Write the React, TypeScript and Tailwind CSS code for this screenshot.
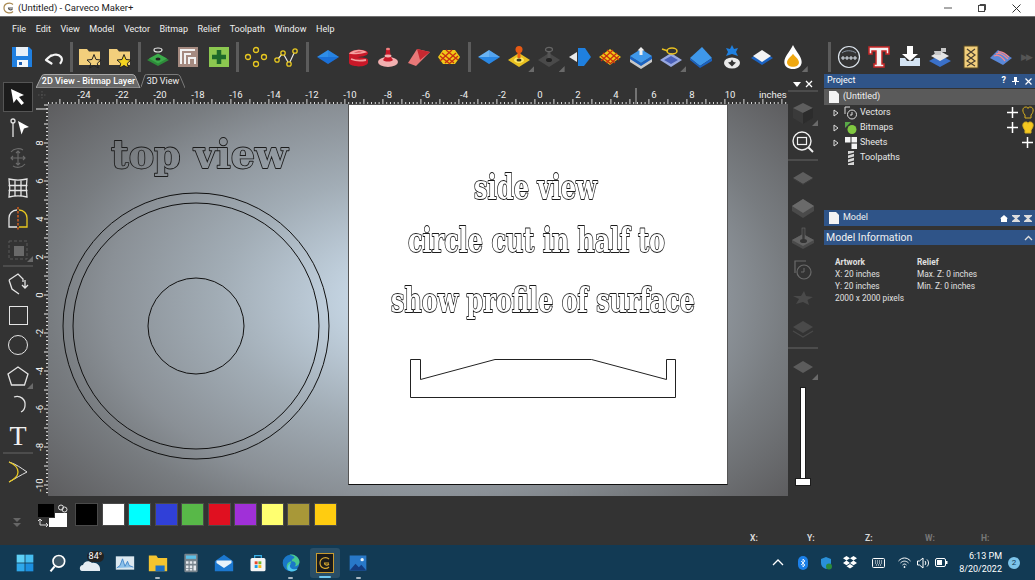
import type { ReactNode } from "react";

const menuItems = ["File", "Edit", "View", "Model", "Vector", "Bitmap", "Relief", "Toolpath", "Window", "Help"];
const swatches = ["bg-[#000000]", "bg-[#ffffff]", "bg-[#00ffff]", "bg-[#3040d8]", "bg-[#58b848]", "bg-[#e01020]", "bg-[#a030d8]", "bg-[#ffff70]", "bg-[#a89838]", "bg-[#ffcc10]"];

function Corner() {
  return <span className="absolute bottom-0 right-0 h-[6px] w-[6px] bg-[#6a6a6a] [clip-path:polygon(100%_0,100%_100%,0_100%)]" />;
}

function Btn({ children, corner, w = "w-[30.4px]" }: { children: ReactNode; corner?: boolean; w?: string }) {
  return (
    <div className={`relative flex h-[30px] shrink-0 items-center justify-center ${w}`}>
      {children}
      {corner && <Corner />}
    </div>
  );
}

function Ico({ children, size = 24 }: { children: ReactNode; size?: number }) {
  return (
    <svg width={size} height={size} viewBox="0 0 24 24" fill="none">
      {children}
    </svg>
  );
}

function Sep({ cls = "mx-[2px]" }: { cls?: string }) {
  return <div className={`h-[30px] w-[3px] shrink-0 bg-[#5c5c5c] ${cls}`} />;
}

// flat blue diamond, the relief buttons start from this shape
function Diamond({ hi, lo }: { hi: string; lo: string }) {
  return (
    <Ico>
      <polygon points="1,12 12,5 23,12" fill={hi} />
      <polygon points="1,12 12,19 23,12" fill={lo} />
      <polygon points="12,5 23,12 12,19" fill={lo} opacity=".35" />
    </Ico>
  );
}

function Save() {
  return (
    <Ico>
      <path d="M2 2h17l3 3v17H2z" fill="#1f7fe0" />
      <rect x="6" y="2" width="12" height="9" fill="#e8f0f8" />
      <rect x="7" y="15" width="11" height="7" fill="#f4f8fc" />
      <rect x="9" y="17" width="3" height="3" fill="#1f5fb0" />
    </Ico>
  );
}

function Undo() {
  return (
    <Ico>
      <path d="M5 15l5-4.500M5 15l5.500 3.500M5 15c5-6 12-7 15-3 1.500 2 1 4-.5 6" stroke="#f4f4f4" strokeWidth="2.200" strokeLinecap="round" />
    </Ico>
  );
}

function FolderStar({ fill }: { fill: string }) {
  return (
    <Ico>
      <path d="M1 4h8l2 2.500h11V20H1z" fill="#f2cf7c" />
      <polygon points="16,9.500 18,14.500 23,15 19.300,18.300 20.400,23 16,20.500 11.600,23 12.700,18.300 9,15 14,14.500" fill={fill} stroke="#222" strokeWidth="1" />
    </Ico>
  );
}

function GreenRing() {
  return (
    <Ico>
      <polygon points="1,15 12,21 23,15 12,9" fill="#2e8b3a" />
      <polygon points="3,13.500 12,18.500 21,13.500 12,8.500" fill="#3cab4a" />
      <ellipse cx="12" cy="14" rx="2.500" ry="1.500" fill="#222" />
      <ellipse cx="12" cy="5" rx="4" ry="2" stroke="#e8e8e8" strokeWidth="1.200" />
    </Ico>
  );
}

function Maze() {
  return (
    <Ico>
      <rect x="2" y="2" width="20" height="20" fill="#a58a80" />
      <path d="M5 19V5h14M9 19V9h6M13 19v-6h6v6" stroke="#f2f2f2" strokeWidth="2" />
    </Ico>
  );
}

function GreenPlus() {
  return (
    <Ico>
      <rect x="2" y="2" width="20" height="20" fill="#8cc850" />
      <path d="M12 5v14M5 12h14" stroke="#1d6a2a" strokeWidth="4.500" />
    </Ico>
  );
}

function Nodes() {
  return (
    <Ico>
      <g stroke="#e8c820" strokeWidth="1.300">
        <circle cx="4" cy="12" r="2.500" />
        <circle cx="12" cy="5" r="2.500" />
        <circle cx="20" cy="12" r="2.500" />
        <circle cx="12" cy="19" r="2.500" />
      </g>
    </Ico>
  );
}

function Polyline() {
  return (
    <Ico>
      <path d="M3 15l6-7 6 11 6-13" stroke="#e8e8e8" strokeWidth="1.200" />
      <g stroke="#e8c820" strokeWidth="1.300" fill="#333">
        <circle cx="3" cy="15" r="2.200" />
        <circle cx="9" cy="8" r="2.200" />
        <circle cx="15" cy="19" r="2.200" />
        <circle cx="21" cy="6" r="2.200" />
      </g>
    </Ico>
  );
}

function Swirl() {
  return (
    <Ico>
      <path d="M3 9c0-5 18-6 19-1 0 3-8 4-11 4 3 1 11 0 11 3v3c-2 5-18 4-19 0z" fill="#c81828" />
      <path d="M5 8c4-3 11-3 14-1-3 1-8 2-14 1zM5 14c5 2 10 2 15 1" stroke="#f4a0a0" strokeWidth="1.800" />
    </Ico>
  );
}

function Cone() {
  return (
    <Ico>
      <ellipse cx="12" cy="17" rx="10" ry="5" fill="#f2b0b0" />
      <path d="M7 15c2-2 3-6 3-11h4c0 5 1 9 3 11-2 2-8 2-10 0z" fill="#c81828" />
      <ellipse cx="12" cy="4" rx="2" ry="1.300" fill="#f08080" />
      <ellipse cx="12" cy="11" rx="3.500" ry="1.400" fill="#f2b0b0" />
    </Ico>
  );
}

function Shard() {
  return (
    <Ico>
      <polygon points="1,18 10,4 23,7 9,21" fill="#e87878" />
      <polygon points="10,4 23,7 13,15" fill="#c82830" />
    </Ico>
  );
}

function Waffle({ rings }: { rings?: boolean }) {
  return (
    <Ico>
      <polygon points={rings ? "6,5 18,5 23,12 18,19 6,19 1,12" : "12,4 23,12 12,20 1,12"} fill="#f0c818" />
      <g stroke="#c83010" strokeWidth="1.300">
        <path d="M5 8l12 10M9 5l12 10M3 11l10 8M15 5l-12 11M19 8l-11 10M21 11l-9 8" />
      </g>
    </Ico>
  );
}

function Pin() {
  return (
    <Ico>
      <polygon points="1,15 12,8 23,15 12,22" fill="#e8c020" />
      <ellipse cx="12" cy="15" rx="5" ry="3" fill="#ffe860" />
      <ellipse cx="12" cy="15" rx="2.500" ry="1.500" fill="#332" />
      <rect x="10.500" y="6" width="3" height="7" fill="#e86018" />
      <circle cx="12" cy="4.500" r="3.500" fill="#e85a14" />
    </Ico>
  );
}

function GreyPin() {
  return (
    <Ico>
      <polygon points="1,15 12,8 23,15 12,22" fill="#4a4a4a" />
      <ellipse cx="12" cy="15" rx="3" ry="2" fill="#222" />
      <rect x="10.500" y="7" width="3" height="6" fill="#555" />
      <ellipse cx="12" cy="4.500" rx="3.500" ry="2.200" stroke="#666" strokeWidth="1.200" />
    </Ico>
  );
}

function Split() {
  return (
    <Ico>
      <polygon points="1,12 9,7 9,17" fill="#e8e8e8" />
      <polygon points="10,3 17,3 23,12 16,21 10,21" fill="#1f80e0" />
    </Ico>
  );
}

function Raise() {
  return (
    <Ico>
      <polygon points="1,13 12,20 23,13 23,17 12,24 1,17" fill="#c8c8c8" />
      <polygon points="1,11 12,18 23,11 23,14 12,21 1,14" fill="#1b62c0" />
      <polygon points="12,4 23,11 12,18 1,11" fill="#3f98ea" />
      <path d="M12 2l3.500 3.500h-2V10h-3V5.500h-2z" fill="#f0f0f0" />
    </Ico>
  );
}

function Sweep() {
  return (
    <Ico>
      <polygon points="1,15 12,8 23,15 12,22" fill="#98a8e0" />
      <polygon points="5,15 12,11 19,15 12,19" fill="#4a60b8" />
      <ellipse cx="13" cy="6" rx="5" ry="3" stroke="#e8c020" strokeWidth="1.500" />
      <path d="M3 4l6 2" stroke="#e8c020" strokeWidth="1.500" />
    </Ico>
  );
}

function Ramp() {
  return (
    <Ico>
      <polygon points="1,13 13,2 23,13 11,21" fill="#3f98ea" />
      <polygon points="11,21 23,13 23,16 11,23" fill="#1b62c0" />
      <polygon points="1,13 11,21 11,23 1,15" fill="#1b62c0" />
    </Ico>
  );
}

function StarDisc() {
  return (
    <Ico>
      <polygon points="12,0 14,4 18,3 16,7 18,11 12,9 6,11 8,7 6,3 10,4" fill="#1f80e0" />
      <ellipse cx="12" cy="18" rx="8" ry="5.500" fill="#eaeaea" />
      <polygon points="12,14.500 13.500,17 16,17.500 14,19.500 12,21.500 10,19.500 8,17.500 10.500,17" fill="#333" />
    </Ico>
  );
}

function WhiteSlab() {
  return (
    <Ico>
      <polygon points="1,13 12,6 23,13 12,20" fill="#1b62c0" />
      <polygon points="3,11 12,5 21,11 12,17" fill="#f4f4f4" />
    </Ico>
  );
}

function Drop() {
  return (
    <Ico size={26}>
      <path d="M12 1C9 7 4 12 4 16.500 4 20.500 7.500 23 12 23s8-2.500 8-6.500C20 12 15 7 12 1z" fill="#fff" />
      <path d="M12 9c-2 3-5.500 5-5.500 8 0 2.500 2.500 4 5.500 4s5.500-1.500 5.500-4c0-3-3.500-5-5.500-8z" fill="#f0a810" />
    </Ico>
  );
}

function Dial() {
  return (
    <Ico>
      <circle cx="12" cy="12" r="10.500" stroke="#dce4ec" strokeWidth="1.200" />
      <path d="M4 13h4M6 11v4M9 12h2v2H9zM13 12h2v2h-2zM17 12h2v2h-2z" stroke="#dce4ec" strokeWidth="1" />
      <path d="M5 8c3-3 10-3 14 0" stroke="#8a96a4" strokeWidth="1" />
    </Ico>
  );
}

function BigT() {
  return (
    <Ico>
      <path d="M2 2h20v7h-3V6h-4v13h2v3H7v-3h2V6H5v3H2z" fill="#f4f4f4" stroke="#c82828" strokeWidth="1.500" />
    </Ico>
  );
}

function Import() {
  return (
    <Ico>
      <path d="M9 1h6v8h5l-8 7-8-7h5z" fill="#fff" />
      <path d="M2 13h5l2 3h6l2-3h5v8H2z" fill="#d4e4f4" />
    </Ico>
  );
}

function Layers() {
  return (
    <Ico>
      <polygon points="1,16 12,10 23,16 12,22" fill="#3a70c8" />
      <polygon points="3,11 12,6 21,11 12,16" fill="#e4e4e4" />
      <path d="M6 6h7V3h5v4h-5v3H7z" fill="#c8c8c8" />
    </Ico>
  );
}

function Card() {
  return (
    <Ico>
      <rect x="5" y="1" width="14" height="22" fill="#f2cf7c" stroke="#5a4a20" />
      <path d="M8 4l8 6-8 6 8 5M16 4l-8 6 8 6-8 5" stroke="#4a4030" strokeWidth="1.200" />
    </Ico>
  );
}

function WavySheet() {
  return (
    <Ico>
      <polygon points="1,13 9,5 23,13 14,20" fill="#5a88d8" />
      <path d="M5 11c4-2 8 1 11 5M7 9c4-2 8 1 12 5M9 7c4-1 8 2 11 5" stroke="#f08890" strokeWidth="1.300" />
    </Ico>
  );
}

function Arrow() {
  return (
    <svg width="20" height="20" viewBox="0 0 20 20">
      <path d="M3 2l13 6-5 2 5 6-2.500 2-5-6-3 4z" fill="#fff" />
    </svg>
  );
}

function LeftTools() {
  const line = { stroke: "#e4e4e4", strokeWidth: 1.300 };
  return (
    <div className="relative flex w-[36px] shrink-0 flex-col items-center">
      <div className="mt-[8px] flex h-[30px] w-[30px] items-center justify-center border border-[#555] bg-[#1c1c1c]">
        <Arrow />
      </div>
      <div className="mt-[3px] flex h-[26px] items-center">
        <Ico>
          <circle cx="7" cy="5" r="2" {...line} />
          <path d="M7 7v14" {...line} />
          <path d="M12 5l11 6-5 1.500-2.500 6z" fill="#fff" />
        </Ico>
      </div>
      <div className="mt-[5px] flex h-[24px] items-center">
        <Ico>
          <g stroke="#6c6c6c" strokeWidth="1.100">
            <path d="M12 5v14M5 12h14M10 7l2-2 2 2M10 17l2 2 2-2M7 10l-2 2 2 2M17 10l2 2-2 2" />
            <path d="M5 6c3-4 9-4 12-2M19 18c-3 4-9 4-12 2" />
          </g>
        </Ico>
      </div>
      <div className="mt-[6px] flex h-[24px] items-center">
        <Ico>
          <path d="M3 3c6 1.500 12 1.500 18 0-1 6-1 12 0 18-6-1.500-12-1.500-18 0 1-6 1-12 0-18zM9 4v16M15 4v16M2.500 9.500h19M2.500 14.500h19" {...line} />
        </Ico>
      </div>
      <div className="mt-[7px] flex h-[24px] items-center">
        <Ico>
          <path d="M11 3C6 3 3 7 3 11v9h8" {...line} />
          <path d="M13 3c5 0 8 4 8 8v9h-8" stroke="#e8c820" strokeWidth="1.300" />
          <path d="M12 0v24" stroke="#e8641a" strokeWidth="1.300" strokeDasharray="2.500 1.500" />
        </Ico>
      </div>
      <div className="relative mt-[7px] flex h-[24px] w-[30px] items-center justify-center">
        <Ico>
          <rect x="3" y="3" width="18" height="18" stroke="#5a5a5a" strokeDasharray="3 2" />
          <rect x="8" y="8" width="10" height="10" fill="#6a6a6a" />
        </Ico>
        <Corner />
      </div>
      <div className="mt-[3px] h-[2px] w-[30px] bg-[#4c4c4c]" />
      <div className="mt-[4px] flex h-[26px] items-center">
        <Ico>
          <path d="M3 8l9-6 5 5 0 3M3 8l3 9 7 5" {...line} />
          <path d="M19 8v8m-3-3l3 3 3-3" {...line} />
        </Ico>
      </div>
      <div className="mt-[6px] flex h-[24px] items-center">
        <div className="h-[19px] w-[19px] border-[1.500px] border-[#e4e4e4]" />
      </div>
      <div className="mt-[5px] flex h-[26px] items-center">
        <div className="h-[20px] w-[20px] rounded-full border-[1.500px] border-[#e4e4e4]" />
      </div>
      <div className="relative mt-[5px] flex h-[26px] w-[30px] items-center justify-center">
        <Ico>
          <polygon points="12,3 22,10 18.500,21 5.500,21 2,10" {...line} />
        </Ico>
        <Corner />
      </div>
      <div className="mt-[3px] flex h-[26px] items-center">
        <Ico>
          <path d="M8 4c6-2 12 2 11 9-.300 3-2 5-4 6" {...line} />
        </Ico>
      </div>
      <div className="mt-[4px] font-['Liberation_Serif',serif] text-[28px] leading-[28px] text-[#f0f0f0]">T</div>
      <div className="mt-[2px] h-[2px] w-[30px] bg-[#4c4c4c]" />
      <div className="mt-[6px] flex h-[24px] items-center">
        <Ico>
          <path d="M3 2c7 2 12 6 18 10-6 3-11 6-18 10" stroke="#e4e4e4" strokeWidth="1" />
          <path d="M3 2c7 3 9 7 9 10s-3 7-9 10" stroke="#e8c820" strokeWidth="1.300" />
        </Ico>
      </div>
      <svg className="absolute left-[12px] top-[443px]" width="10" height="12" viewBox="0 0 10 12">
        <path d="M1 1h8L5 5zM1 6h8l-4 4z" fill="#666" />
      </svg>
    </div>
  );
}

function TopRuler() {
  const minor = Array.from({ length: 195 }, (_, i) => i);
  const labels = [-24, -22, -20, -18, -16, -14, -12, -10, -8, -6, -4, -2, 0, 2, 4, 6, 8, 10];
  return (
    <svg width="752" height="16" viewBox="0 0 752 16" className="block shrink-0">
      <g stroke="#d8d8d8" strokeWidth="1">
        {minor.map((i) => (
          <line key={i} x1={12.5 + i * 3.8} x2={12.5 + i * 3.8} y1={i % 5 === 3 ? 11 : 14} y2="16" />
        ))}
      </g>
      <path d="M2 7h8M6 3v8" stroke="#555" strokeDasharray="1.500 1.500" />
      {labels.map((v) => (
        <text key={v} x={504 + v * 19} y="10" textAnchor="middle" fontSize="9.500" fontFamily="Roboto, sans-serif" fill="#f0f0f0">
          {v}
        </text>
      ))}
      <text x="723" y="10" fontSize="9.500" fontFamily="Roboto, sans-serif" fill="#f0f0f0">
        inches
      </text>
      <line x1="600" x2="600" y1="0" y2="16" stroke="#8a8a8a" strokeWidth="1.500" />
    </svg>
  );
}

function LeftRuler() {
  const labels = [8, 6, 4, 2, 0, -2, -4, -6, -8, -10];
  const minor = Array.from({ length: 103 }, (_, i) => i);
  return (
    <svg width="12" height="392" viewBox="0 0 12 392" className="block shrink-0 overflow-visible">
      <g stroke="#f0f0f0" strokeWidth="1">
        {minor.map((i) => (
          <line key={i} x1={i % 5 === 0 ? 8 : 10} x2="12" y1={1 + i * 3.8} y2={1 + i * 3.8} />
        ))}
      </g>
      <line x1="0" x2="12" y1="5" y2="5" stroke="#e8e8e8" />
      {labels.map((v) => {
        const y = 191 - v * 19;
        return (
          <text key={v} transform={`translate(7 ${y}) rotate(-90)`} textAnchor="middle" fontSize="9.500" fontFamily="Roboto, sans-serif" fill="#f0f0f0">
            {v}
          </text>
        );
      })}
    </svg>
  );
}

// hollow lettering: heavy stroke painted first, the fill then covers its inner half
function Outline({ x, y, w, size, fill, children }: { x: number; y: number; w: number; size: number; fill: string; children: string }) {
  return (
    <text x={x} y={y} textLength={w} lengthAdjust="spacingAndGlyphs" fontFamily="'DejaVu Serif', serif" fontWeight="700" fontSize={size} fill={fill} stroke="#1c1c1c" strokeWidth="1.800" paintOrder="stroke" strokeLinejoin="round">
      {children}
    </text>
  );
}

function Canvas() {
  return (
    <div className="relative h-[392px] w-[740px] bg-[radial-gradient(ellipse_520px_330px_at_370px_196px,#d0deea_0%,#c4d4e2_13%,#a2adb6_38%,#8a9096_60%,#787c80_71%,#5e5e60_92%,#585858_100%)]">
      <svg width="740" height="392" viewBox="0 0 740 392" className="absolute left-0 top-0 overflow-visible will-change-transform">
        <defs>
          <radialGradient id="canvasFill" gradientUnits="userSpaceOnUse" cx="0" cy="0" r="1" gradientTransform="translate(370 196) scale(520 330)">
            <stop offset="0" stopColor="#d0deea" />
            <stop offset=".13" stopColor="#c4d4e2" />
            <stop offset=".38" stopColor="#a2adb6" />
            <stop offset=".6" stopColor="#8a9096" />
            <stop offset=".71" stopColor="#787c80" />
            <stop offset=".92" stopColor="#5e5e60" />
            <stop offset="1" stopColor="#585858" />
          </radialGradient>
        </defs>
        <Outline x={63} y={64} w={177} size={40} fill="url(#canvasFill)">
          top view
        </Outline>
        <g stroke="#111" strokeWidth="1" fill="none">
          <circle cx="148" cy="222" r="133" />
          <circle cx="148" cy="222" r="123" />
          <circle cx="148" cy="222" r="48" />
        </g>
      </svg>
      <div className="absolute left-[300px] top-0 h-[381px] w-[380px] border border-[#555] border-b-[#111] bg-white">
        <svg width="380" height="380" viewBox="0 0 380 380" className="absolute -left-px -top-px overflow-visible will-change-transform">
          <Outline x={126} y={95} w={123} size={33} fill="#fff">
            side view
          </Outline>
          <Outline x={60} y={148} w={257} size={33} fill="#fff">
            circle cut in half to
          </Outline>
          <Outline x={43} y={208} w={304} size={33} fill="#fff">
            show profile of surface
          </Outline>
          <polygon points="62.500,255.500 72.500,255.500 72.500,275.500 147,255.500 243.500,255.500 318.500,275.500 318.500,255.500 327.500,255.500 327.500,293.500 62.500,293.500" fill="none" stroke="#222" strokeWidth="1" />
        </svg>
      </div>
    </div>
  );
}

function IsoFlat() {
  return (
    <Ico>
      <polygon points="2,12 12,6 22,12 12,18" fill="#5e5e5e" />
      <polygon points="2,12 12,18 22,12 22,13 12,19 2,13" fill="#3c3c3c" />
    </Ico>
  );
}

function IsoBlock() {
  return (
    <Ico>
      <polygon points="1,10 12,3 23,10 23,15 12,22 1,15" fill="#4a4a4a" />
      <polygon points="1,10 12,3 23,10 12,17" fill="#6a6a6a" />
    </Ico>
  );
}

function IsoStick() {
  return (
    <Ico>
      <polygon points="1,14 12,8 23,14 23,17 12,23 1,17" fill="#4a4a4a" />
      <polygon points="1,14 12,8 23,14 12,20" fill="#636363" />
      <rect x="11" y="2" width="3" height="12" fill="#3a3a3a" stroke="#6a6a6a" strokeWidth=".6" />
      <ellipse cx="12.500" cy="15" rx="3.500" ry="2" fill="#333" />
    </Ico>
  );
}

function IsoStack() {
  return (
    <Ico>
      <polygon points="2,10 12,4 22,10 12,16" fill="#4a4a4a" />
      <path d="M2 14l10 6 10-6" stroke="#4a4a4a" strokeWidth="1.300" />
    </Ico>
  );
}

function RightStrip() {
  return (
    <div className="flex w-[36px] shrink-0 flex-col items-center pr-[6px]">
      <div className="mt-[4px] flex h-[12px] w-full items-center justify-center gap-[4px]">
        <svg width="8" height="5" viewBox="0 0 8 5">
          <path d="M0 0h8L4 5z" fill="#fff" />
        </svg>
        <svg width="8" height="8" viewBox="0 0 8 8">
          <path d="M1 1l6 6M7 1L1 7" stroke="#fff" strokeWidth="1.300" />
        </svg>
      </div>
      <div className="h-[2px] w-[30px] bg-[#4c4c4c]" />
      <div className="relative mt-[8px] flex h-[26px] w-[30px] items-center justify-center">
        <Ico>
          <polygon points="12,2 22,7 22,17 12,23 2,17 2,7" fill="#3a3a3a" />
          <polygon points="12,2 22,7 12,12 2,7" fill="#5e5e5e" />
          <polygon points="12,12 22,7 22,17 12,23" fill="#2c2c2c" />
        </Ico>
        <Corner />
      </div>
      <div className="mt-[4px] flex h-[24px] items-center">
        <Ico>
          <circle cx="11" cy="11" r="9" stroke="#f0f0f0" strokeWidth="1.400" />
          <rect x="6.500" y="7.500" width="9" height="7" stroke="#f0f0f0" strokeWidth="1.200" />
          <path d="M17.500 17.500L22 22" stroke="#f0f0f0" strokeWidth="2" />
        </Ico>
      </div>
      <div className="mt-[5px] h-[2px] w-[30px] bg-[#4c4c4c]" />
      <div className="mt-[5px] flex h-[24px] items-center">
        <IsoFlat />
      </div>
      <div className="mt-[6px] flex h-[24px] items-center">
        <IsoBlock />
      </div>
      <div className="mt-[6px] flex h-[24px] items-center">
        <IsoStick />
      </div>
      <div className="mt-[8px] flex h-[24px] items-center">
        <Ico>
          <path d="M15 3H4v12" stroke="#6a6a6a" strokeWidth="1.200" />
          <circle cx="13" cy="14" r="7" stroke="#6a6a6a" strokeWidth="1.200" />
          <path d="M13 10v4h-3" stroke="#6a6a6a" strokeWidth="1" />
        </Ico>
      </div>
      <div className="mt-[4px] flex h-[24px] items-center">
        <Ico>
          <polygon points="13,5 15,10 22,11 16.500,14 18,19 12,16 5,18 8,13 2,10 10,10" fill="#4a4a4a" />
        </Ico>
      </div>
      <div className="mt-[7px] flex h-[24px] items-center">
        <IsoStack />
      </div>
      <div className="mt-[6px] h-[2px] w-[30px] bg-[#4c4c4c]" />
      <div className="relative mt-[5px] flex h-[26px] w-[30px] items-center justify-center">
        <Ico>
          <polygon points="2,12 12,6 22,12 12,18" fill="#5c5c5c" />
        </Ico>
        <Corner />
      </div>
      <div className="flex flex-col items-center">
        <div className="mt-[8px] h-[91px] w-[4px] bg-white outline outline-1 outline-[#1c1c1c]" />
        <div className="h-[6px] w-[14px] bg-white outline outline-1 outline-[#1c1c1c]" />
      </div>
    </div>
  );
}

function Tabs() {
  return (
    <div className="flex h-[14px] shrink-0 items-stretch">
      <div className="relative flex w-[105px] items-center justify-center">
        <svg width="105" height="14" viewBox="0 0 105 14" className="absolute left-0 top-0">
          <path d="M0 14L6 1.500Q7 .500 9 .500H96Q98 .500 99 2L104 14z" fill="#686868" stroke="#a8a8a8" />
        </svg>
        <span className="relative text-[9px] font-medium leading-none text-white">2D View - Bitmap Layer</span>
      </div>
      <div className="relative flex w-[44px] items-center justify-center">
        <svg width="44" height="14" viewBox="0 0 44 14" className="absolute left-0 top-0">
          <path d="M0 13L4 1Q5 .500 7 .500H36Q38 .500 39 2L44 14" fill="none" stroke="#7a7a7a" />
        </svg>
        <span className="relative text-[9px] leading-none text-[#f0f0f0]">3D View</span>
      </div>
    </div>
  );
}

function Swatches() {
  return (
    <div className="flex h-[31px] shrink-0 items-start pt-[7px]">
      <div className="relative h-[24px] w-[39px] shrink-0">
        <div className="absolute left-[13px] top-[10px] h-[14px] w-[18px] bg-white" />
        <div className="absolute left-[1px] top-0 h-[15px] w-[18px] border border-[#333] bg-black" />
        <svg className="absolute left-[21px] top-[1px]" width="11" height="9" viewBox="0 0 11 9">
          <circle cx="4" cy="3.500" r="2.500" fill="none" stroke="#ddd" />
          <circle cx="7.500" cy="5.500" r="2.500" fill="none" stroke="#ddd" />
        </svg>
        <svg className="absolute left-[1px] top-[15px]" width="12" height="9" viewBox="0 0 12 9">
          <path d="M3 1v6h8M1 3l2-2 2 2M9 5l2 2-2 2" fill="none" stroke="#ddd" />
        </svg>
      </div>
      <div className="flex gap-[3.500px]">
        {swatches.map((c) => (
          <div key={c} className={`h-[23px] w-[23px] border border-[#4a4a4a] ${c}`} />
        ))}
      </div>
    </div>
  );
}

function TreeRow({ icon, label, plus, bulb }: { icon: ReactNode; label: string; plus?: boolean; bulb?: "off" | "on" }) {
  return (
    <div className="flex h-[15px] items-center pl-[9px] text-[9px] text-[#e8e8e8]">
      <span className="w-[11px]">
        {plus && (
          <svg width="6" height="8" viewBox="0 0 6 8">
            <path d="M1 1l4 3-4 3z" fill="none" stroke="#ddd" />
          </svg>
        )}
      </span>
      <span className="flex w-[14px] items-center justify-center">{icon}</span>
      <span className="ml-[2px] flex-1">{label}</span>
      {plus && (
        <svg width="11" height="11" viewBox="0 0 11 11" className={bulb ? "mr-[3px]" : "mr-[2px]"}>
          <path d="M5.500 0v11M0 5.500h11" stroke="#fff" strokeWidth="1.500" />
        </svg>
      )}
      {bulb && (
        <svg width="14" height="14" viewBox="0 0 14 14">
          <path d="M4 12V9C1 6 1 1 5 1c1 0 2 .500 2 1.500C7 1.500 8 1 9 1c4 0 4 5 1 8v3z" fill={bulb === "on" ? "#f4c820" : "none"} stroke="#d8b020" />
        </svg>
      )}
    </div>
  );
}

function RightPanel() {
  return (
    <div className="flex w-[211px] shrink-0 flex-col">
      <div className="flex h-[14px] items-center justify-between bg-[#2f5488] pl-[3px] pr-[3px] text-[9px] text-white">
        <span>Project</span>
        <span className="flex items-center gap-[6px] font-bold">
          <span>?</span>
          <svg width="7" height="8" viewBox="0 0 7 8">
            <path d="M2 0h3v4h2v1H4v3H3V5H0V4h2z" fill="#fff" />
          </svg>
          <svg width="7" height="7" viewBox="0 0 7 7">
            <path d="M.500.500l6 6M6.500.500l-6 6" stroke="#fff" strokeWidth="1.200" />
          </svg>
        </span>
      </div>
      <div className="mt-[1px] flex h-[16px] items-center bg-[#5a5a5a] pl-[5px] text-[9px] text-[#f0f0f0]">
        <svg width="10" height="12" viewBox="0 0 10 12">
          <path d="M0 0h7l3 3v9H0z" fill="#f4f4f4" />
        </svg>
        <span className="ml-[4px]">(Untitled)</span>
      </div>
      <TreeRow
        plus
        bulb="off"
        label="Vectors"
        icon={
          <svg width="14" height="14" viewBox="0 0 14 14" fill="none" stroke="#ddd">
            <path d="M6 1H1v7" />
            <circle cx="8" cy="8.500" r="4.500" />
            <path d="M8 6v3H6" />
          </svg>
        }
      />
      <TreeRow
        plus
        bulb="on"
        label="Bitmaps"
        icon={
          <svg width="14" height="14" viewBox="0 0 14 14">
            <polygon points="1,1 7,1 1,7" fill="#58a848" />
            <circle cx="8" cy="8.500" r="4.500" fill="#80c840" />
          </svg>
        }
      />
      <TreeRow
        plus
        label="Sheets"
        icon={
          <svg width="12" height="12" viewBox="0 0 12 12" fill="#f4f4f4">
            <rect x="0" y="0" width="5.500" height="5.500" />
            <rect x="6.500" y="0" width="5.500" height="5.500" />
            <rect x="6.500" y="6.500" width="5.500" height="5.500" />
          </svg>
        }
      />
      <TreeRow
        label="Toolpaths"
        icon={
          <svg width="6" height="14" viewBox="0 0 6 14">
            <rect x="0" y="0" width="6" height="14" fill="#d8d8d8" />
            <path d="M0 4l6-2M0 8l6-2M0 12l6-2" stroke="#333" strokeWidth="1.200" />
          </svg>
        }
      />
      <div className="mt-[45px] flex h-[16px] items-center justify-between bg-[#2f5488] pl-[5px] pr-[3px] text-[9px] text-[#f0f0f0]">
        <span className="flex items-center gap-[4px]">
          <svg width="10" height="12" viewBox="0 0 10 12">
            <path d="M0 0h7l3 3v9H0z" fill="#f4f4f4" />
          </svg>
          Model
        </span>
        <span className="flex items-center gap-[4px]">
          <svg width="8" height="7" viewBox="0 0 8 7">
            <path d="M4 0l4 3.500H7V7H1V3.500H0z" fill="#fff" />
          </svg>
          <svg width="8" height="7" viewBox="0 0 8 7">
            <path d="M0 0h8v1L5 3.500 8 6v1H0V6l3-2.500L0 1z" fill="#ddd" />
          </svg>
          <svg width="8" height="7" viewBox="0 0 8 7">
            <path d="M0 0h8v1L5 3.500 8 6v1H0V6l3-2.500L0 1z" fill="#ddd" />
          </svg>
        </span>
      </div>
      <div className="mt-[4px] flex h-[15px] items-center justify-between bg-[#2f5488] pl-[2px] pr-[2px] text-[10.500px] text-[#f0f0f0]">
        <span>Model Information</span>
        <svg width="9" height="6" viewBox="0 0 9 6">
          <path d="M1 5l3.500-3.500L8 5" fill="none" stroke="#ddd" strokeWidth="1.300" />
        </svg>
      </div>
      <div className="ml-[11px] mt-[11px] flex text-[8.300px] leading-[12px] text-[#e0e0e0]">
        <div className="w-[82px]">
          <div className="font-bold">Artwork</div>
          <div>X: 20 inches</div>
          <div>Y: 20 inches</div>
          <div>2000 x 2000 pixels</div>
        </div>
        <div>
          <div className="font-bold">Relief</div>
          <div>Max. Z: 0 inches</div>
          <div>Min. Z: 0 inches</div>
        </div>
      </div>
    </div>
  );
}

function TaskIcon({ children, dot }: { children: ReactNode; dot?: boolean }) {
  return (
    <div className="relative flex h-[35px] w-[33.300px] items-center justify-center">
      <Ico size={20}>{children}</Ico>
      {dot && <span className="absolute bottom-[1px] left-[14px] h-[2px] w-[5px] rounded bg-[#aab8c2]" />}
    </div>
  );
}

function Taskbar() {
  return (
    <div className="flex h-[35px] shrink-0 items-center bg-[#123a54] text-white">
      <div className="flex items-center pl-[8px]">
        <TaskIcon>
          <rect x="2" y="2" width="9.500" height="9.500" fill="#5fd0f5" />
          <rect x="12.500" y="2" width="9.500" height="9.500" fill="#46bdf0" />
          <rect x="2" y="12.500" width="9.500" height="9.500" fill="#2fa8ea" />
          <rect x="12.500" y="12.500" width="9.500" height="9.500" fill="#1c90e0" />
        </TaskIcon>
        <TaskIcon>
          <circle cx="13" cy="10" r="7" fill="#3c5666" stroke="#fff" strokeWidth="2" />
          <path d="M8 16l-5 6" stroke="#fff" strokeWidth="2.500" />
        </TaskIcon>
        <div className="relative flex h-[35px] w-[33.300px] items-center justify-center">
          <Ico>
            <path d="M3 20c-3 0-3-6 1-6 1-4 6-5 9-2 4-1 9 2 8 8z" fill="#e4ecf2" />
          </Ico>
          <span className="absolute left-[12px] top-[6px] rounded-full bg-[#222] px-[2px] text-[9px] leading-[11px]">84°</span>
        </div>
        <TaskIcon>
          <rect x="1" y="4" width="22" height="16" fill="#dce8f0" />
          <path d="M2 18l4-3 3-8 3 9 3-6 2 5 5 2" fill="#8cc0e8" stroke="#3a80c8" />
        </TaskIcon>
        <TaskIcon dot>
          <path d="M1 3h9l2 3h11v16H1z" fill="#f4c430" />
          <rect x="9" y="15" width="11" height="7" fill="#1b70c8" />
        </TaskIcon>
        <TaskIcon>
          <rect x="4" y="1" width="16" height="22" rx="1" fill="#76838c" />
          <rect x="6" y="3" width="12" height="4" fill="#5cc0e8" />
          <path d="M6 10h3v3H6zM10.500 10h3v3h-3zM15 10h3v3h-3zM6 15h3v3H6zM10.500 15h3v3h-3zM15 15h3v6h-3zM6 19h3v2H6zM10.500 19h3v2h-3z" fill="#e4e8ec" />
        </TaskIcon>
        <TaskIcon>
          <path d="M1 10l11-8 11 8v12H1z" fill="#1c78d0" />
          <path d="M3 9h18v3l-9 6-9-6z" fill="#e8f2fa" />
        </TaskIcon>
        <TaskIcon>
          <rect x="3" y="6" width="18" height="16" rx="2" fill="#f4f4f4" />
          <path d="M8 6V3h8v3" stroke="#38b0e8" strokeWidth="1.500" />
          <rect x="8" y="10" width="3.500" height="3.500" fill="#e84828" />
          <rect x="12.500" y="10" width="3.500" height="3.500" fill="#70b828" />
          <rect x="8" y="14.500" width="3.500" height="3.500" fill="#18a0e8" />
          <rect x="12.500" y="14.500" width="3.500" height="3.500" fill="#f8b818" />
        </TaskIcon>
        <TaskIcon dot>
          <circle cx="12" cy="12" r="10" fill="#1a78c8" />
          <path d="M8 20c-3-4 0-11 6-10 4 .500 5 5 2 6 4 0 7-3 6-7C20 3 14 1 10 2 16 3 18 6 14 7" fill="#48c890" />
          <path d="M8 20c3 3 9 3 12-1-3 1-7 1-9-2-1-2 0-4 2-4-3-1-6 3-5 7z" fill="#50c8f0" />
        </TaskIcon>
        <div className="relative ml-[2px] mr-[2px] flex h-[30px] w-[30px] items-center justify-center rounded-[3px] bg-[#2a4e66]">
          <div className="flex h-[20px] w-[18px] items-center justify-center border border-[#c89a30] bg-[#1a1a1a]">
            <svg width="14" height="14" viewBox="0 0 14 14" fill="none" stroke="#d8a830" strokeWidth="1.200">
              <path d="M11 3C8 0 2 2 2 7s6 7 9 4" />
              <path d="M11 7H6.500c0 2 2.500 3 4.500 1" />
            </svg>
          </div>
          <span className="absolute bottom-0 left-[9px] h-[2px] w-[12px] rounded bg-[#70c8f0]" />
        </div>
        <TaskIcon dot>
          <rect x="2" y="3" width="20" height="18" fill="#2878c8" />
          <path d="M2 21l7-8 4 4 3-3 6 7z" fill="#143c80" />
          <circle cx="17" cy="8" r="2" fill="#e8f4fc" />
        </TaskIcon>
      </div>
      <div className="ml-auto flex items-center pr-[15px]">
        <svg width="12" height="7" viewBox="0 0 12 7" className="mr-[14px]">
          <path d="M1 6l5-5 5 5" fill="none" stroke="#fff" strokeWidth="1.300" />
        </svg>
        <div className="mr-[11px] flex h-[14px] w-[10px] items-center justify-center rounded-[5px] bg-[#1c80e8]">
          <svg width="6" height="10" viewBox="0 0 6 10">
            <path d="M1 3l4 4-2 2V1l2 2-4 4" fill="none" stroke="#fff" strokeWidth=".8" />
          </svg>
        </div>
        <svg width="14" height="14" viewBox="0 0 14 14" className="mr-[10px]">
          <path d="M7 1l5 2v4c0 3-2 5-5 6-3-1-5-3-5-6V3z" fill="#2a90d8" />
          <circle cx="10" cy="10.500" r="3" fill="#2c8a3c" />
        </svg>
        <svg width="14" height="13" viewBox="0 0 14 13" className="mr-[15px]" fill="#fff">
          <path d="M3.500 0L7 2.300 3.500 4.600 0 2.300zM10.500 0L14 2.300l-3.500 2.300L7 2.300zM3.500 4.600L7 6.900 3.500 9.200 0 6.900zM10.500 4.600L14 6.900l-3.500 2.300L7 6.900zM7 8l3.500 2.200L7 12.500l-3.500-2.300z" />
        </svg>
        <svg width="13" height="10" viewBox="0 0 13 10" className="mr-[13px]">
          <rect x=".5" y=".5" width="12" height="9" rx="1" fill="#1d4058" stroke="#fff" />
          <path d="M3 3h7M3 5h7M4 7h5" stroke="#fff" strokeDasharray="1 1" />
        </svg>
        <svg width="13" height="11" viewBox="0 0 13 11" className="mr-[6px]" fill="none" stroke="#fff">
          <path d="M.5 4c3.500-4 8.500-4 12 0M2.500 6c2.500-2.500 5.500-2.500 8 0M4.500 8c1.500-1.300 2.500-1.300 4 0" />
          <circle cx="6.500" cy="10" r=".6" fill="#fff" />
        </svg>
        <svg width="13" height="12" viewBox="0 0 13 12" className="mr-[5px]" fill="none" stroke="#fff">
          <path d="M.5 4h2L6 1v10L2.500 8h-2zM8 4c1 1 1 3 0 4M10 2.500c2 2 2 5 0 7" />
        </svg>
        <svg width="13" height="9" viewBox="0 0 13 9" className="mr-[11px]">
          <rect x=".5" y=".5" width="10" height="8" rx="1.500" fill="none" stroke="#fff" />
          <rect x="2" y="2" width="5" height="5" fill="#fff" />
          <rect x="11" y="3" width="1.500" height="3" fill="#fff" />
        </svg>
        <div className="mr-[6px] text-right text-[9px] leading-[13px]">
          <div>6:13 PM</div>
          <div>8/20/2022</div>
        </div>
        <div className="flex h-[12px] w-[12px] items-center justify-center rounded-full bg-[#7cc4ea] text-[8px] text-[#123a54]">2</div>
      </div>
    </div>
  );
}

export default function App() {
  return (
    <div className="flex h-[580px] w-[1035px] flex-col overflow-hidden bg-[#333333] font-['Roboto',sans-serif]">
      <div className="flex h-[17px] shrink-0 items-center border-b border-[#707070] bg-white pl-[3px] text-[9.500px] text-[#222]">
        <svg width="12" height="12" viewBox="0 0 12 12" fill="none" strokeWidth="1.200" className="mr-[3px]">
          <path d="M10 2.500C7.500 0 1 1 1 6s6.500 6 9 3.500" stroke="#a88850" />
          <path d="M10 6H5.500c0 1.800 2.500 2.500 4 1.300" stroke="#555" />
        </svg>
        <span>(Untitled) - Carveco Maker+</span>
        <div className="ml-auto flex items-center gap-[26px] pr-[14px]">
          <svg width="8" height="8" viewBox="0 0 8 8">
            <path d="M0 4h8" stroke="#555" />
          </svg>
          <svg width="8" height="8" viewBox="0 0 8 8" fill="none" stroke="#444">
            <rect x=".5" y="1.500" width="6" height="6" />
            <path d="M2 1.500V.5h5.500V6h-1" />
          </svg>
          <svg width="9" height="9" viewBox="0 0 9 9">
            <path d="M.5.5l8 8M8.500.5l-8 8" stroke="#333" />
          </svg>
        </div>
      </div>

      <div className="flex h-[25px] shrink-0 items-center gap-[9.500px] pl-[12px] text-[9px] text-[#f0f0f0]">
        {menuItems.map((m) => (
          <span key={m}>{m}</span>
        ))}
      </div>

      <div className="flex h-[32px] shrink-0 items-start pl-[7px]">
        <Btn><Save /></Btn>
        <Btn><Undo /></Btn>
        <Sep />
        <Btn><FolderStar fill="none" /></Btn>
        <Btn><FolderStar fill="#f4d420" /></Btn>
        <Sep />
        <Btn><GreenRing /></Btn>
        <Btn><Maze /></Btn>
        <Btn><GreenPlus /></Btn>
        <Sep />
        <Btn><Nodes /></Btn>
        <Btn><Polyline /></Btn>
        <Sep cls="ml-[4px] mr-[4px]" />
        <Btn><Diamond hi="#2f8ee8" lo="#1b70d8" /></Btn>
        <Btn><Swirl /></Btn>
        <Btn><Cone /></Btn>
        <Btn><Shard /></Btn>
        <Btn><Waffle rings /></Btn>
        <Sep cls="ml-[4px] mr-[2px]" />
        <Btn><Diamond hi="#6ab4f4" lo="#2a88e4" /></Btn>
        <Btn corner><Pin /></Btn>
        <Btn corner><GreyPin /></Btn>
        <Btn><Split /></Btn>
        <Btn><Waffle /></Btn>
        <Btn><Raise /></Btn>
        <Btn corner><Sweep /></Btn>
        <Btn><Ramp /></Btn>
        <Btn><StarDisc /></Btn>
        <Btn><WhiteSlab /></Btn>
        <Btn corner><Drop /></Btn>
        <Sep cls="ml-[20px] mr-[3px]" />
        <Btn><Dial /></Btn>
        <Btn><BigT /></Btn>
        <Btn><Import /></Btn>
        <Btn><Layers /></Btn>
        <Btn><Card /></Btn>
        <Btn><WavySheet /></Btn>
        <span className="ml-[5px] mt-[9px] text-[9px] tracking-[-2px] text-[#555]">▶▶</span>
      </div>

      <div className="flex h-[453px] shrink-0">
        <LeftTools />
        <div className="flex w-[752px] shrink-0 flex-col">
          <Tabs />
          <TopRuler />
          <div className="flex">
            <LeftRuler />
            <Canvas />
          </div>
          <Swatches />
        </div>
        <RightStrip />
        <RightPanel />
      </div>

      <div className="flex h-[18px] shrink-0 items-center pt-[4px] text-[8.500px] font-bold">
        <span className="ml-[750px] w-[57px] text-[#d8d8d8]">X:</span>
        <span className="w-[58px] text-[#d8d8d8]">Y:</span>
        <span className="w-[60px] text-[#d8d8d8]">Z:</span>
        <span className="w-[56px] text-[#777]">W:</span>
        <span className="text-[#777]">H:</span>
      </div>

      <Taskbar />
    </div>
  );
}
